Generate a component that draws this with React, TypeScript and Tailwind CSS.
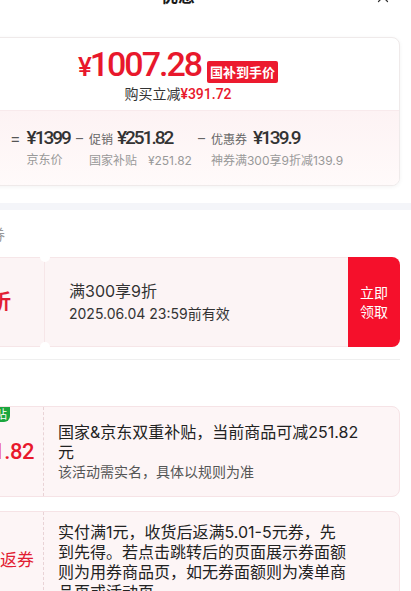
import { X } from 'lucide-react';

const RED = 'text-[#e8182c]';
const NUM = "font-['Roboto',sans-serif]";

const Breakdown = () => (
  <div className="flex items-start gap-[6px] bg-gradient-to-b from-[#fdf3f4] to-[#fffafa] pb-[16px] pl-[53px] pt-[17px]">
    <span className="text-[16px] leading-[20px] text-[#555]">=</span>
    <div className="flex flex-col">
      <span className={`${NUM} text-[19px] font-medium leading-[20px] tracking-[-2px] text-[#333]`}>¥1399</span>
      <span className="mt-[4px] text-[12px] leading-[16px] text-[#999]">京东价</span>
    </div>
    <span className="text-[14px] leading-[20px] text-[#666]">–</span>
    <div className="flex flex-col">
      <div className="flex items-baseline gap-[4px]">
        <span className="text-[12px] text-[#666]">促销</span>
        <span className={`${NUM} text-[19px] font-medium leading-[20px] tracking-[-2px] text-[#333]`}>¥251.82</span>
      </div>
      <span className="mt-[4px] text-[12px] leading-[16px] text-[#999]">
        国家补贴<span className="ml-[11px]">¥251.82</span>
      </span>
    </div>
    <span className="text-[14px] leading-[20px] text-[#666]">–</span>
    <div className="flex flex-col">
      <div className="flex items-baseline gap-[6px]">
        <span className="text-[12px] text-[#666]">优惠券</span>
        <span className={`${NUM} text-[19px] font-medium leading-[20px] tracking-[-2px] text-[#333]`}>¥139.9</span>
      </div>
      <span className="mt-[4px] text-[12px] leading-[16px] text-[#999]">神券满300享9折减139.9</span>
    </div>
  </div>
);

const SubsidyCard = (props: { tag?: string; left: React.ReactNode; children: React.ReactNode; className?: string }) => {
  const { tag, left, children, className } = props;
  return (
    <div className={`relative mx-[11px] flex rounded-[8px] border border-[#f6e3e6] bg-[#fdf5f6] ${className || ''}`}>
      {tag && (
        <span className="absolute left-[-1px] top-[0px] rounded-br-[6px] rounded-tl-[8px] bg-[#1ba63e] px-[3px] text-[12px] leading-[15px] text-white">
          {tag}
        </span>
      )}
      <div className="flex w-[87px] shrink-0 items-center justify-end border-r border-dashed border-[#e9d3d6] pr-[9px]">
        {left}
      </div>
      {children}
    </div>
  );
};

export default function App() {
  return (
    <div className="h-[591px] w-[411px] overflow-hidden bg-white font-['Inter','Noto_Sans_CJK_SC',sans-serif]">
      <div className="-ml-[55px] w-[466px]">
        <div className="relative -mt-[25px] flex h-[44px] items-center justify-center">
          <span className="text-[17px] font-semibold text-[#1a1a1a]">优惠</span>
          <X className="absolute right-[19px] top-[13px] h-[18px] w-[18px] text-[#333]" strokeWidth={1.6} />
        </div>

        <div className="mx-[11px] mt-[18px] overflow-hidden rounded-[8px] border border-[#efeaea] bg-white shadow-[0_1px_4px_rgba(0,0,0,0.05)]">
          <div className="flex flex-col items-center pb-[6px] pt-[9px]">
            <div className="flex items-end">
              <span className={`${NUM} text-[34px] font-medium leading-[34px] tracking-[-2px] ${RED}`}>
                <span className="text-[26px]">¥</span>1007.28
              </span>
              <span className="mb-[1px] ml-[6px] rounded-[2px] bg-[#ec1a2e] px-[3px] text-[13px] font-bold leading-[22px] text-white">
                国补到手价
              </span>
            </div>
            <div className="text-[14px] leading-[20px] text-[#333]">
              购买立减<span className={`${NUM} font-medium ${RED}`}>¥391.72</span>
            </div>
          </div>
          <div className="border-t border-[#f8eaec]">
            <Breakdown />
          </div>
        </div>

        <div className="mt-[17px] h-[7px] bg-[#f4f5f9]" />

        <div className="mt-[15px] pl-[15px] text-[15px] leading-[20px] text-[#999]">优惠券</div>

        <div className="mx-[11px] mt-[12px] flex h-[90px]">
          <div className="relative flex flex-1 rounded-l-[8px] border border-r-0 border-[#f6e6e8] bg-[#fcf4f5]">
            <div className="flex w-[88px] shrink-0 items-center justify-end border-r border-[#f6e6e8] pr-[33px]">
              <span className="text-[28px] font-bold text-[#e21d33]">9</span>
              <span className="text-[20px] font-bold text-[#e21d33]">折</span>
            </div>
            <span className="absolute left-[83px] top-[-6px] h-[10px] w-[10px] rounded-full bg-white" />
            <span className="absolute bottom-[-6px] left-[83px] h-[10px] w-[10px] rounded-full bg-white" />
            <div className="flex flex-col justify-center pl-[24px]">
              <span className="text-[16px] leading-[22px] text-[#333]">满300享9折</span>
              <span className="mt-[2px] text-[14px] leading-[20px] text-[#333]">2025.06.04 23:59前有效</span>
            </div>
          </div>
          <div className="flex w-[52px] flex-col items-center justify-center rounded-r-[8px] bg-[#f5102b] text-[14px] leading-[19px] text-white">
            <span>立即</span>
            <span>领取</span>
          </div>
        </div>

        <div className="mx-[11px] mt-[12px] border-b border-[#efefef]" />

        <SubsidyCard
          className="mt-[46px] h-[91px]"
          tag="国家补贴"
          left={<span className={`${NUM} text-[22px] font-medium tracking-[-0.5px] ${RED}`}>¥251.82</span>}>
          <div className="flex w-[324px] flex-col justify-center pl-[14px]">
            <span className="text-[16px] leading-[20px] text-[#222]">国家&京东双重补贴，当前商品可减251.82元</span>
            <span className="text-[14px] leading-[19px] text-[#555]">该活动需实名，具体以规则为准</span>
          </div>
        </SubsidyCard>

        <SubsidyCard className="mt-[14px] h-[100px]" left={<span className="text-[17px] text-[#e21d33]">返券</span>}>
          <div className="w-[304px] pl-[14px] pt-[10px] text-[16px] leading-[20px] text-[#222]">
            实付满1元，收货后返满5.01-5元券，先到先得。若点击跳转后的页面展示券面额则为用券商品页，如无券面额则为凑单商品页或活动页。
          </div>
        </SubsidyCard>
      </div>
    </div>
  );
}
